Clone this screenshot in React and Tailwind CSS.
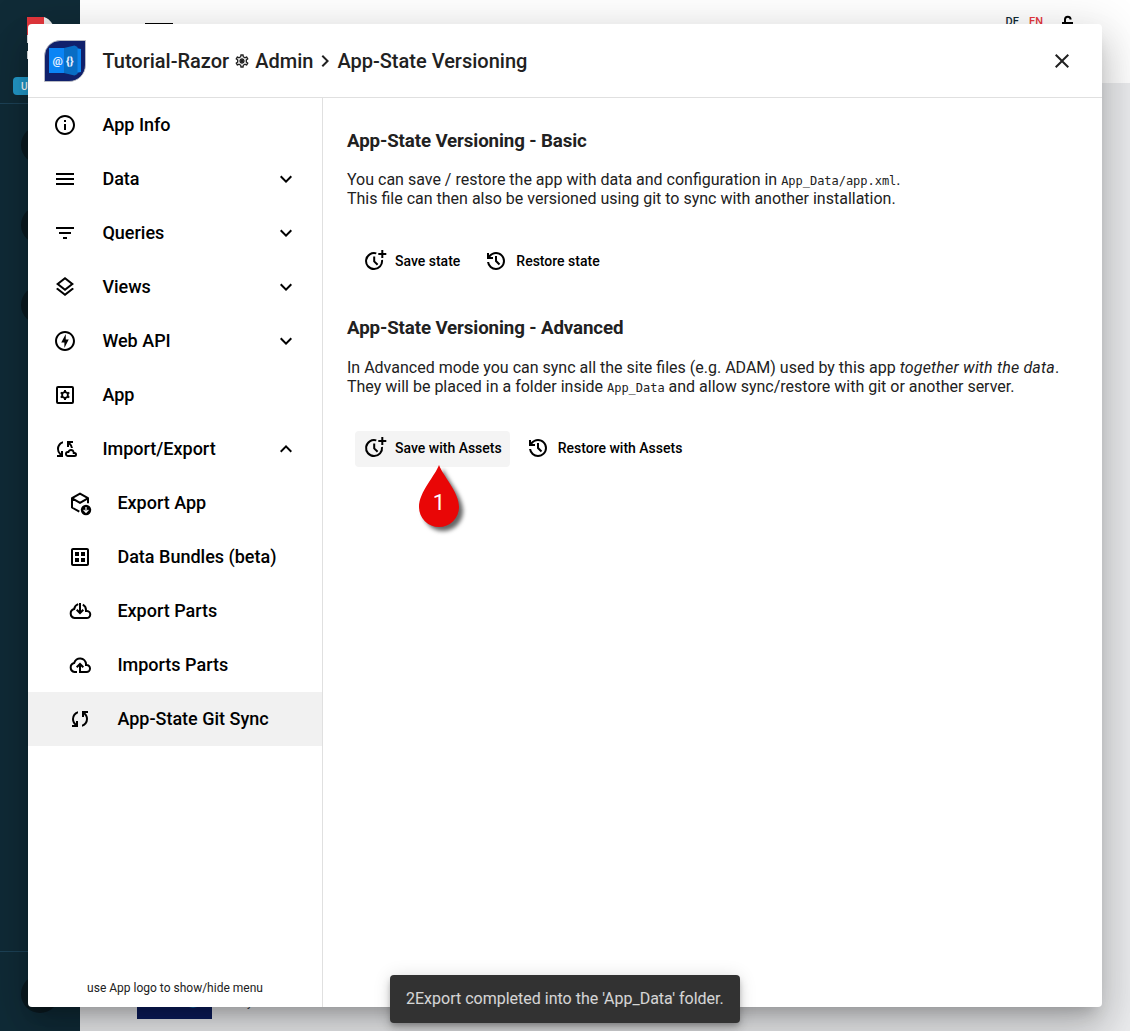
import React from "react";
import {
  MdInfoOutline, MdMenu, MdFilterList, MdOutlineLayers, MdOutlineOfflineBolt,
  MdOutlineCloudSync, MdOutlineDataset,
  MdExpandMore, MdExpandLess, MdClose, MdChevronRight, MdOutlineSettings,
} from "react-icons/md";

function SyncIcon() {
  return (
    <svg viewBox="0 0 24 24" width="24" height="24" fill="currentColor">
      <path d="M4 20v-2h2.75l-.4-.35q-1.225-1.225-1.787-2.662T4 12.05q0-2.775 1.663-4.938T10 4.25v2.1Q8.2 7 7.1 8.563T6 12.05q0 1.125.425 2.188T7.75 16.2l.25.25V14h2v6zm10-.25v-2.1q1.8-.65 2.9-2.212T18 11.95q0-1.125-.425-2.187T16.25 7.8L16 7.55V10h-2V4h6v2h-2.75l.4.35q1.225 1.225 1.788 2.663T20 11.95q0 2.775-1.662 4.938T14 19.75" />
    </svg>
  );
}

function BoxDownIcon() {
  return (
    <svg viewBox="0 0 24 24" width="24" height="24" fill="none" stroke="currentColor" strokeWidth="2" className="overflow-visible">
      <path d="M11.3 20.7 4 16.5V7.2L12 2.6l8 4.6v5M4.2 7.4l7.8 4.5 7.8-4.5" strokeLinejoin="round" />
      <circle cx="18" cy="19" r="5.2" fill="currentColor" stroke="none" />
      <path d="M18 16v5.200M15.600 18.900l2.400 2.400 2.400-2.400" stroke="white" strokeWidth="1.2" />
    </svg>
  );
}

function CloudDownIcon() {
  return (
    <svg viewBox="0 0 24 24" width="24" height="24" fill="none" stroke="currentColor" strokeWidth="2">
      <path d="M10.2 5.1A6 6 0 0 0 6.2 10 4.6 4.6 0 0 0 6.5 19h12a3.5 3.5 0 0 0 .5-7h-1v-1a6 6 0 0 0-3.2-5.3" />
      <path d="M12 4v9.6M8.7 10.7 12 14l3.3-3.3" />
    </svg>
  );
}

function CloudUpIcon() {
  return (
    <svg viewBox="0 0 24 24" width="24" height="24" fill="none" stroke="currentColor" strokeWidth="2">
      <path d="M9 19H6.5a4.6 4.6 0 0 1-.3-9A6 6 0 0 1 18 11v1h.5a3.5 3.5 0 0 1 0 7H12v-7.5" />
      <path d="M8.700 14.300 12 11l3.300 3.300" />
    </svg>
  );
}

function AppSettingsIcon() {
  return (
    <svg viewBox="0 0 24 24" width="24" height="24" fill="none" stroke="currentColor">
      <rect x="4" y="4" width="16" height="16" rx="1" strokeWidth="2" />
      <circle cx="12" cy="12" r="2.9" strokeWidth="1.8" />
      <path d="M12 7v2M12 15v2M7.670 9.500l1.730 1M14.600 13.500l1.730 1M7.670 14.500l1.730-1M14.600 10.500l1.730-1" strokeWidth="2" />
    </svg>
  );
}

function SaveIcon() {
  return (
    <svg viewBox="0 0 24 24" width="24" height="24" fill="none" stroke="currentColor" strokeWidth="2">
      <path d="M13.300 5.350A8 8 0 1 0 19 12" />
      <path d="M11.200 8.500v4.900l3.400 3.400" />
      <path d="M19.300 2v8M15.300 6h8" />
    </svg>
  );
}

function RestoreIcon() {
  return (
    <svg viewBox="0 0 24 24" width="24" height="24" fill="currentColor">
      <path d="M12 21q-3.45 0-6.012-2.287T3.05 13H5.1q.35 2.6 2.313 4.3T12 19q2.925 0 4.963-2.037T19 12t-2.037-4.962T12 5q-1.725 0-3.225.8T6.25 8H9v2H3V4h2v2.35q1.275-1.6 3.113-2.475T12 3q1.875 0 3.513.713t2.85 1.924t1.925 2.85T21 12t-.712 3.513t-1.925 2.85t-2.85 1.925T12 21m2.8-4.8L11 12.4V7h2v4.6l3.2 3.2z" />
    </svg>
  );
}

function GearIcon() {
  return (
    <svg viewBox="0 0 24 24" width="16" height="16" className="ml-[5px] mr-[5px]">
      <MdOutlineSettings size={24} />
      <circle cx="12" cy="12" r="2.600" fill="currentColor" />
    </svg>
  );
}

const menu = [
  { label: "App Info", Icon: MdInfoOutline },
  { label: "Data", Icon: MdMenu, arrow: "down" },
  { label: "Queries", Icon: MdFilterList, arrow: "down" },
  { label: "Views", Icon: MdOutlineLayers, arrow: "down" },
  { label: "Web API", Icon: MdOutlineOfflineBolt, arrow: "down" },
  { label: "App", Icon: AppSettingsIcon },
  { label: "Import/Export", Icon: MdOutlineCloudSync, arrow: "up" },
  { label: "Export App", Icon: BoxDownIcon, sub: true },
  { label: "Data Bundles (beta)", Icon: MdOutlineDataset, sub: true },
  { label: "Export Parts", Icon: CloudDownIcon, sub: true },
  { label: "Imports Parts", Icon: CloudUpIcon, sub: true },
  { label: "App-State Git Sync", Icon: SyncIcon, sub: true, active: true },
];

function MenuItem({ label, Icon, arrow, sub, active }) {
  return (
    <div className={`flex h-[54px] items-center pr-[24.5px] text-black ${sub ? "pl-[40.400px]" : "pl-[25.400px]"} ${active ? "bg-[#f1f1f1]" : ""}`}>
      <Icon size={24} />
      <span className="ml-[25px] flex-1 whitespace-nowrap pb-0.5 text-[18px] font-medium">{label}</span>
      {arrow === "down" && <MdExpandMore size={24} />}
      {arrow === "up" && <MdExpandLess size={24} />}
    </div>
  );
}

function AppLogo() {
  return (
    <svg width="42" height="42" viewBox="0 0 42 42">
      <path d="M16 .5H41.500V25A16.500 16.500 0 0 1 25 41.500H.5V16A15.500 15.500 0 0 1 16 .5Z" fill="#10206b" stroke="#c5c5c5" strokeWidth=".8" />
      <path d="M5 8h17v25H5z" fill="#0a84f5" />
      <path d="m32 8 5 1v23l-5 1z" fill="#0c86ee" />
      <path d="m20 8 10.500-2.500L33.500 7v27l-3 1.500L20 33z" fill="#086dc4" />
      <text x="8.500" y="25" fontSize="11.500" fontWeight="700" fontFamily="Roboto" fill="#e2eeff">@</text>
      <text x="22" y="24.500" fontSize="11.500" fontWeight="900" fontFamily="Roboto" fill="#e2eeff">{"{}"}</text>
    </svg>
  );
}

function ActionButton({ Icon, hot, children }) {
  return (
    <button className={`flex h-9 items-start rounded px-2 text-[14px] font-medium text-black ${hot ? "bg-[#f4f4f4]" : ""}`}>
      <span className={Icon === SaveIcon ? "mt-1" : "mt-[5px]"}><Icon /></span>
      <span className="ml-2 mt-[7px] whitespace-nowrap leading-5">{children}</span>
    </button>
  );
}

function Pin() {
  return (
    <div className="absolute left-[63px] top-[33px] h-[76px] w-[54px]">
      <svg width="54" height="76" viewBox="0 0 54 76" className="[filter:drop-shadow(4px_4px_2px_rgba(0,0,0,0.6))]">
        <path d="M21 1C25 12 41 28 41 43a20 20 0 0 1-40 0C1 28 17 12 21 1Z" fill="#e90606" />
      </svg>
      <span className="absolute left-0 top-[25px] w-[42px] text-center text-[22px] leading-7 text-white">1</span>
    </div>
  );
}

function Backdrop() {
  return (
    <div className="flex h-full">
      <aside className="flex w-20 flex-col overflow-hidden bg-[#102b37]">
        <div className="h-[104px] border-b border-[#1d4257]">
          <div className="ml-[27px] mt-[17px] h-[18px] w-[26px] overflow-hidden">
            <svg width="26" height="18"><path d="M0 0h17v18H0z" fill="#e6373d" /><path d="M17 0q5 1 9 8h-9z" fill="#eee" /></svg>
          </div>
          <div className="ml-[27px] h-2 w-4 bg-[#e4e7e9]" />
          <div className="ml-[27px] mt-2 h-2 w-4 bg-[#e4e7e9]" />
          <div className="ml-[13px] mt-[18px] flex h-[18px] items-center rounded-sm bg-[#239acb] pl-2 text-[10px] font-medium text-white">U</div>
        </div>
        <div className="ml-[21px] mt-[22px] flex flex-1 flex-col gap-[42px]">
          <div className="size-[38px] rounded-full bg-[#0b1a21]" />
          <div className="size-[38px] rounded-full bg-[#0b1a21]" />
          <div className="size-[38px] rounded-full bg-[#0b1a21]" />
        </div>
        <div className="h-20 border-t border-[#1d4257] pl-[21px] pt-[23px]">
          <div className="size-[38px] rounded-full bg-[#0b1a21]" />
        </div>
      </aside>
      <div className="flex flex-1 flex-col bg-[#ebecee]">
        <header className="flex h-[83px] items-start bg-white">
          <div className="ml-[65px] mt-[23px] h-2 w-[28px] bg-black" />
          <div className="ml-auto mt-[15px] flex items-start text-[11px] font-medium leading-[14px]">
            <span className="text-[#102b37]">DE</span>
            <span className="ml-[10px] text-[#e6373d]">EN</span>
            <svg className="ml-[19px] mr-[56px]" width="12" height="14" viewBox="0 0 12 14">
              <path d="M3 8V4.500a2.800 2.800 0 0 1 5.600 0" stroke="black" strokeWidth="2" fill="none" />
              <path d="M0 7h11v7H0z" />
            </svg>
          </div>
        </header>
        <div className="mt-auto flex h-9 items-start">
          <div className="ml-[57px] h-6 w-[75px] bg-[#0c1d5e]">
            <div className="ml-[46px] h-[13px] w-5 rounded-b-full bg-[#0864a8]" />
          </div>
          <span className="ml-[35px] mt-[-1px] text-[12px] leading-4 text-gray-700">y</span>
        </div>
      </div>
    </div>
  );
}

export default function App() {
  return (
    <div className="relative h-[1031px] w-[1130px] overflow-hidden font-[Roboto,sans-serif]">
      <Backdrop />
      <div className="absolute inset-x-7 bottom-6 top-6 flex flex-col rounded bg-white text-[#212121] shadow-[0_11px_15px_-7px_rgba(0,0,0,0.2),0_24px_38px_3px_rgba(0,0,0,0.14),0_9px_46px_8px_rgba(0,0,0,0.12)]">
        <header className="flex h-[74px] items-center border-b border-[#e0e0e0] pl-4 pr-7 text-[20px] font-medium">
          <AppLogo />
          <span className="ml-[16.400px]">Tutorial-Razor</span>
          <GearIcon />
          <span>Admin</span>
          <MdChevronRight size={24} />
          <span>App-State Versioning</span>
          <MdClose className="ml-auto" size={24} />
        </header>
        <div className="flex min-h-0 flex-1">
          <nav className="flex w-[295px] flex-col border-r border-[#e0e0e0]">
            {menu.map((m) => <MenuItem key={m.label} {...m} />)}
            <p className="mb-[11px] mt-auto text-center text-[12px] leading-4">use App logo to show/hide menu</p>
          </nav>
          <main className="flex-1 pl-6 pt-[31px]">
            <h3 className="text-[18.720px] font-bold leading-6 tracking-[-0.120px]">App-State Versioning - Basic</h3>
            <p className="mt-[17px] whitespace-nowrap text-[16px] leading-[19px]">
              You can save / restore the app with data and configuration in <code className="font-['DejaVu_Sans_Mono',monospace] text-[12px] leading-none tracking-[-0.03px]">App_Data/app.xml</code>.<br />
              This file can then also be versioned using git to sync with another installation.
            </p>
            <div className="ml-2 mt-9 flex gap-2">
              <ActionButton Icon={SaveIcon}>Save state</ActionButton>
              <ActionButton Icon={RestoreIcon}>Restore state</ActionButton>
            </div>
            <h3 className="mt-9 text-[18.720px] font-bold leading-6 tracking-[-0.120px]">App-State Versioning - Advanced</h3>
            <p className="mt-[18px] whitespace-nowrap text-[16px] leading-[19px]">
              In Advanced mode you can sync all the site files (e.g. ADAM) used by this app <em className="tracking-[0.180px]">together with the data</em>.<br />
              They will be placed in a folder inside <code className="font-['DejaVu_Sans_Mono',monospace] text-[12px] leading-none tracking-[-0.03px]">App_Data</code> and allow sync/restore with git or another server.
            </p>
            <div className="relative ml-2 mt-[35px] flex gap-2">
              <ActionButton Icon={SaveIcon} hot>Save with Assets</ActionButton>
              <ActionButton Icon={RestoreIcon}>Restore with Assets</ActionButton>
              <Pin />
            </div>
          </main>
        </div>
      </div>
      <div className="absolute bottom-2 left-[390px] flex h-12 w-[350px] items-center rounded bg-[#323232] pl-4 text-[16px] text-white/80 shadow-[0_3px_5px_-1px_rgba(0,0,0,0.2),0_6px_10px_rgba(0,0,0,0.14),0_1px_18px_rgba(0,0,0,0.12)]">
        2Export completed into the 'App_Data' folder.
      </div>
    </div>
  );
}
